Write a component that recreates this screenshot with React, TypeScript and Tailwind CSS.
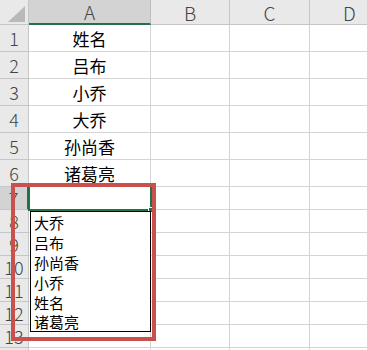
import React from 'react'

const cols = [
    { label: 'A', w: 122 },
    { label: 'B', w: 79 },
    { label: 'C', w: 80 },
    { label: 'D', w: 80 },
]

const names = ['姓名', '吕布', '小乔', '大乔', '孙尚香', '诸葛亮']
const suggestions = ['大乔', '吕布', '孙尚香', '小乔', '姓名', '诸葛亮']

// row heights: 1-6 are tall, 7+ are default
const rows = Array.from({ length: 14 }, (_, i) => ({
    n: i + 1,
    h: i < 6 ? 27 : 23,
    text: names[i] ?? '',
}))

const font = { fontFamily: '"Noto Sans CJK SC", "Liberation Sans", sans-serif' }

export default function App() {
    return (
        <div className="relative w-[367px] h-[350px] overflow-hidden bg-white" style={font}>
            {/* Column headers */}
            <div className="flex h-[25px]">
                <div className="relative w-[29px] shrink-0 bg-[#e9e9e9] border-r border-b border-[#c6c6c6]">
                    <svg className="absolute right-[3px] bottom-[2px]" width="17" height="16" viewBox="0 0 17 16">
                        <polygon points="17,0 17,16 0,16" fill="#b9b9b9" />
                    </svg>
                </div>
                {cols.map((c) => (
                    <div
                        key={c.label}
                        style={{ width: c.w }}
                        className={`shrink-0 flex items-center justify-center text-[19px] font-light leading-none text-[#444] border-r ${
                            c.label === 'A'
                                ? 'bg-[#d3d3d3] border-[#bdbdbd] border-b-2 border-b-[#217346]'
                                : 'bg-[#e9e9e9] border-[#c6c6c6] border-b'
                        }`}
                    >
                        {c.label}
                    </div>
                ))}
            </div>

            {/* Body rows */}
            {rows.map((r) => (
                <div key={r.n} className="flex" style={{ height: r.h }}>
                    <div
                        className={`w-[29px] shrink-0 flex items-center justify-center text-[18px] font-light leading-none text-[#444] border-b border-[#c6c6c6] ${
                            r.n === 7 ? 'bg-[#d3d3d3] border-r-2 border-r-[#217346]' : 'bg-[#e9e9e9] border-r border-r-[#c6c6c6]'
                        }`}
                    >
                        {r.n}
                    </div>
                    {cols.map((c) => (
                        <div
                            key={c.label}
                            style={{ width: c.w }}
                            className="shrink-0 flex items-center justify-center text-[17px] leading-none text-black border-r border-b border-[#d4d4d4]"
                        >
                            {c.label === 'A' ? r.text : ''}
                        </div>
                    ))}
                </div>
            ))}

            {/* Active cell A7 */}
            <div className="absolute left-[28px] top-[185px] w-[124px] h-[26px] border-2 border-[#217346]" />
            <div className="absolute left-[148px] top-[207px] w-[6px] h-[6px] bg-[#217346] border border-white" />

            {/* AutoComplete pick list */}
            <div className="absolute left-[30px] top-[211px] w-[121px] h-[121px] bg-white border border-black py-px">
                {suggestions.map((s) => (
                    <div key={s} className="h-[19.8px] pl-[3px] flex items-center text-[15px] leading-none text-black">
                        {s}
                    </div>
                ))}
            </div>

            {/* Red annotation frame */}
            <div className="absolute left-[11px] top-[183px] w-[145px] h-[158px] border-[4px] border-[#c8514e]" />
        </div>
    )
}
